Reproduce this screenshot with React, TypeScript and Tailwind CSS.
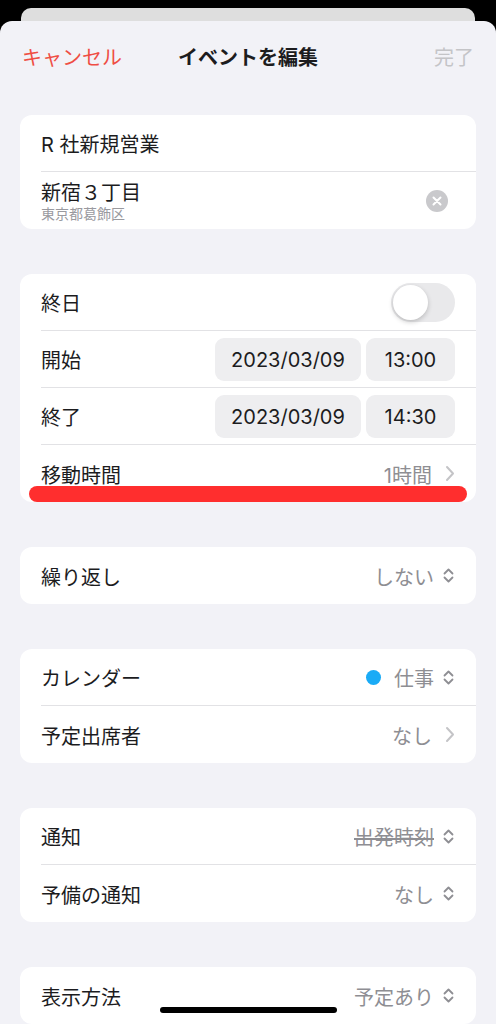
import React from 'react';

const FONT = { fontFamily: 'Inter, "Noto Sans CJK JP", sans-serif' };

const ChevronRight = () => (
  <svg width="10" height="17" viewBox="0 0 10 17" className="ml-[13px]">
    <path d="M2 2l6 6.5L2 15" fill="none" stroke="#c4c4c7" strokeWidth="2" strokeLinecap="round" strokeLinejoin="round" />
  </svg>
);

const UpDown = () => (
  <svg width="13" height="17" viewBox="0 0 13 17" className="ml-[8px]">
    <path d="M2.5 6.5l4-4 4 4M2.5 10.5l4 4 4-4" fill="none" stroke="#8e8e93" strokeWidth="1.8" strokeLinecap="round" strokeLinejoin="round" />
  </svg>
);

const Row = ({ children, last }: { children: React.ReactNode; last?: boolean }) => (
  <div className="h-[57px] pl-[21px]">
    <div className={`h-full flex items-center pr-[21px] ${last ? '' : 'border-b border-[#e2e2e5]'}`}>{children}</div>
  </div>
);

const Card = ({ children }: { children: React.ReactNode }) => (
  <div className="bg-white rounded-[12px] mx-[20px] overflow-hidden">{children}</div>
);

const Pill = ({ children, w }: { children: React.ReactNode; w: string }) => (
  <div className={`${w} h-[43px] rounded-[9px] bg-[#eeeef0] flex items-center justify-center pt-[2px] text-[20px] text-[#1c1c1e]`}>
    {children}
  </div>
);

const Label = ({ children }: { children: React.ReactNode }) => (
  <span className="pt-[4px] text-[20px] text-[#1c1c1e] flex-1">{children}</span>
);

const Value = ({ children, strike }: { children: React.ReactNode; strike?: boolean }) => (
  <span className={`pt-[4px] text-[20px] text-[#8e8e93] ${strike ? 'line-through' : ''}`}>{children}</span>
);

const App: React.FC = () => {
  return (
    <div className="relative w-[496px] h-[1024px] overflow-hidden bg-black" style={FONT}>
      {/* stacked sheet behind */}
      <div className="mx-[21px] mt-[8px] h-[13px] rounded-t-[10px] bg-[#dedede]" />

      <div className="bg-[#f2f2f7] rounded-t-[12px] h-[1003px]">
        {/* header */}
        <div className="h-[72px] px-[22px] pt-[2px] flex items-center justify-between">
          <span className="text-[20px] text-[#ef4d43] w-[100px]">キャンセル</span>
          <span className="text-[20px] font-bold text-[#1c1c1e]">イベントを編集</span>
          <span className="text-[20px] text-[#c4c4c7] w-[100px] text-right">完了</span>
        </div>

        <div className="mt-[22px] flex flex-col gap-[45px]">
          <Card>
            <Row>
              <Label>R 社新規営業</Label>
            </Row>
            <Row last>
              <div className="flex-1 flex flex-col pt-[2px]">
                <span className="text-[20px] leading-[24px] text-[#1c1c1e]">新宿３丁目</span>
                <span className="text-[14px] leading-[17px] text-[#9a9a9f]">東京都葛飾区</span>
              </div>
              <div className="w-[22px] h-[22px] rounded-full bg-[#c9c9cc] flex items-center justify-center mr-[7px] mt-[1px]">
                <svg width="10" height="10" viewBox="0 0 10 10">
                  <path d="M1.5 1.5l7 7M8.5 1.5l-7 7" stroke="white" strokeWidth="2" strokeLinecap="round" />
                </svg>
              </div>
            </Row>
          </Card>

          <Card>
            <Row>
              <Label>終日</Label>
              <div className="w-[64px] h-[39px] rounded-full bg-[#e9e9eb] p-[2px]">
                <div className="w-[35px] h-[35px] rounded-full bg-white shadow-[0_2px_5px_rgba(0,0,0,0.2)]" />
              </div>
            </Row>
            <Row>
              <Label>開始</Label>
              <div className="flex gap-[5px]">
                <Pill w="w-[146px]">2023/03/09</Pill>
                <Pill w="w-[89px]">13:00</Pill>
              </div>
            </Row>
            <Row>
              <Label>終了</Label>
              <div className="flex gap-[5px]">
                <Pill w="w-[146px]">2023/03/09</Pill>
                <Pill w="w-[89px]">14:30</Pill>
              </div>
            </Row>
            <Row last>
              <Label>移動時間</Label>
              <Value>1時間</Value>
              <ChevronRight />
            </Row>
          </Card>

          <Card>
            <Row last>
              <Label>繰り返し</Label>
              <Value>しない</Value>
              <UpDown />
            </Row>
          </Card>

          <Card>
            <Row>
              <Label>カレンダー</Label>
              <span className="w-[15px] h-[15px] rounded-full bg-[#1aabf6] mr-[13px]" />
              <Value>仕事</Value>
              <UpDown />
            </Row>
            <Row last>
              <Label>予定出席者</Label>
              <Value>なし</Value>
              <ChevronRight />
            </Row>
          </Card>

          <Card>
            <Row>
              <Label>通知</Label>
              <Value strike>出発時刻</Value>
              <UpDown />
            </Row>
            <Row last>
              <Label>予備の通知</Label>
              <Value>なし</Value>
              <UpDown />
            </Row>
          </Card>

          <Card>
            <Row last>
              <Label>表示方法</Label>
              <Value>予定あり</Value>
              <UpDown />
            </Row>
          </Card>
        </div>
      </div>

      {/* red annotation line */}
      <div className="absolute left-[29px] top-[486px] w-[438px] h-[16px] rounded-full bg-[#ff2e2e]" />

      {/* home indicator */}
      <div className="absolute left-[160px] top-[1007px] w-[177px] h-[6px] rounded-full bg-black" />
    </div>
  );
};

export default App;
